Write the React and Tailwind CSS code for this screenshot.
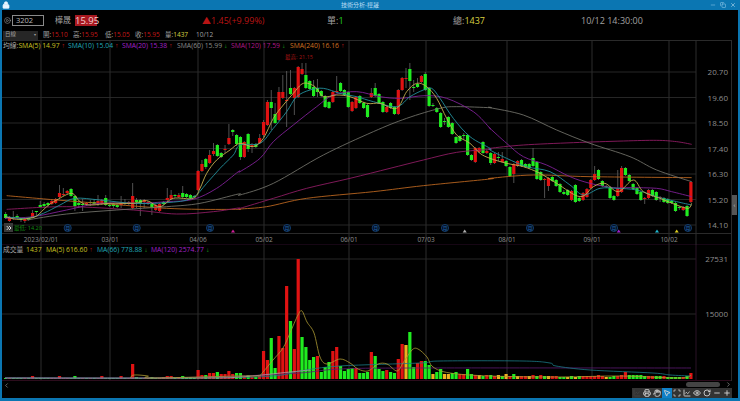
import React from 'react';
import { Lock, Minus, Copy, X, Printer, Hand, MousePointer2, Scan, Eye, RotateCw, Plus, ChevronLeft, ChevronRight, ChevronsRight, PlayCircle, LineChart } from 'lucide-react';

const RED = '#e01212';
const GREEN = '#20ec20';
const ORANGE = '#f0b020';
const barX = (i) => 5.6 + 3.85 * i;

// top, bottom, wick top, wick bottom, colour (page pixels), one row per trading day
const CANDLES = [
  [214,218,212,219,'g'],[217,221,216,222,'r'],[217,218,211,220,'g'],[216,218,214,219,'g'],[218,220,218,222,'g'],[219,221,219,223,'r'],[218,220,218,221,'g'],[213,218,210,218,'r'],[211,212,211,215,'g'],[205,207,201,207,'g'],
  [204,206,202,208,'g'],[203,205,202,207,'g'],[201,204,200,205,'r'],[199,203,198,204,'r'],[193,197,185,198,'r'],[194,195,188,196,'r'],[191,193,190,194,'r'],[189,196,188,197,'g'],[196,206,195,211,'g'],[203,205,200,208,'g'],
  [204,205,199,211,'g'],[203,204,202,206,'r'],[202,203,200,206,'g'],[202,204,199,205,'g'],[201,203,195,206,'r'],[200,204,199,205,'r'],[198,205,195,206,'g'],[205,206,204,207,'g'],[204,206,203,208,'g'],[205,207,204,208,'g'],
  [203,205,196,208,'r'],[203,204,199,205,'g'],[202,204,201,205,'r'],[196,208,183,209,'r'],[200,202,198,208,'g'],[200,204,199,216,'g'],[200,202,199,208,'r'],[202,204,201,205,'r'],[204,207,203,215,'g'],[205,210,204,211,'r'],
  [204,211,203,212,'r'],[202,204,201,205,'g'],[198,200,188,202,'r'],[195,199,190,200,'r'],[195,196,194,198,'g'],[195,197,193,198,'r'],[193,197,186,198,'g'],[194,197,193,198,'g'],[195,198,194,199,'g'],[196,197,195,198,'g'],
  [171,190,170,191,'r'],[164,171,160,172,'r'],[159,167,158,169,'g'],[155,163,150,164,'r'],[151,154,143,156,'r'],[145,156,144,157,'g'],[153,157,152,158,'g'],[149,150,145,153,'r'],[138,144,124,145,'r'],[130,132,129,136,'g'],
  [135,144,134,146,'g'],[137,157,136,160,'g'],[142,157,141,158,'r'],[134,149,133,152,'g'],[145,147,143,153,'r'],[144,147,143,148,'g'],[138,143,134,144,'r'],[122,135,120,137,'r'],[102,125,100,126,'r'],[102,108,90,130,'g'],
  [114,123,103,124,'g'],[92,120,87,121,'r'],[92,98,75,99,'r'],[100,101,71,127,'r'],[88,94,70,95,'g'],[88,98,87,115,'r'],[67,97,66,98,'r'],[69,74,63,75,'r'],[75,88,63,89,'g'],[81,89,80,90,'g'],
  [87,96,80,97,'g'],[88,92,79,97,'g'],[91,96,90,97,'g'],[96,107,95,108,'g'],[102,108,101,109,'g'],[92,102,91,103,'r'],[91,92,76,93,'r'],[83,91,82,92,'g'],[90,95,89,96,'g'],[92,107,91,108,'g'],
  [102,111,101,112,'r'],[97,108,96,109,'r'],[96,103,95,104,'g'],[103,108,102,109,'g'],[105,117,104,118,'g'],[93,97,88,98,'r'],[88,96,83,97,'g'],[94,103,93,104,'g'],[102,112,101,113,'g'],[107,112,106,113,'r'],
  [103,108,102,109,'g'],[107,114,106,115,'g'],[90,114,89,115,'r'],[78,90,77,91,'r'],[78,79,68,88,'r'],[69,81,63,100,'g'],[87,88,80,92,'g'],[84,87,78,88,'g'],[76,82,75,83,'r'],[74,90,72,91,'g'],
  [88,106,87,107,'g'],[105,106,103,107,'g'],[108,112,107,113,'g'],[113,127,112,128,'g'],[121,122,118,125,'g'],[117,127,116,128,'g'],[123,134,122,135,'g'],[137,143,136,144,'g'],[136,141,135,142,'g'],[135,136,133,140,'g'],
  [135,155,134,156,'g'],[155,160,154,161,'g'],[148,162,147,163,'r'],[148,152,147,153,'r'],[142,153,141,154,'g'],[151,153,150,154,'r'],[153,163,152,165,'g'],[154,163,153,164,'r'],[157,158,152,161,'g'],[159,162,152,163,'r'],
  [161,166,160,167,'g'],[167,176,166,177,'g'],[164,174,163,183,'r'],[161,166,160,167,'r'],[160,166,159,167,'g'],[164,167,163,168,'g'],[164,168,163,169,'g'],[158,166,148,167,'g'],[162,179,161,180,'g'],[172,180,171,181,'g'],
  [179,180,178,198,'r'],[178,186,177,191,'r'],[177,181,176,182,'g'],[180,186,179,187,'g'],[184,192,183,193,'g'],[192,194,190,195,'g'],[190,195,189,196,'g'],[191,200,190,201,'r'],[185,202,184,203,'g'],[198,201,197,202,'g'],
  [193,200,192,201,'r'],[189,197,188,198,'r'],[180,188,179,189,'r'],[174,180,166,181,'r'],[170,179,169,180,'g'],[181,186,180,187,'g'],[186,187,185,188,'g'],[187,198,186,199,'g'],[196,200,195,201,'g'],[188,196,170,197,'r'],
  [168,192,166,193,'r'],[168,175,167,176,'g'],[175,181,174,182,'g'],[184,189,183,190,'g'],[188,194,187,195,'g'],[192,200,191,201,'g'],[198,199,197,204,'r'],[190,198,189,199,'r'],[190,196,189,197,'g'],[192,200,191,201,'g'],
  [197,198,196,202,'r'],[198,202,197,203,'g'],[199,203,198,204,'g'],[201,203,200,204,'g'],[203,211,202,212,'g'],[207,208,206,210,'g'],[207,210,206,211,'r'],[206,216,205,217,'g'],[182,202,181,203,'r'],
];

const VOLUME = ('g1 r1 g1 g1 g1 r1 g1 r3 g1 g1 g1 g1 r1 r1 r3 r1 r1 g1 g3 g1 r1 g1 r1 g1 r1 r3 g1 g1 g1 g1 r3 g1 r1 r15 g2 g1 r1 r1 g2 g1 '
  + 'r1 r2 r3 r3 g1 r2 g3 g2 g2 g1 r9 r4 g4 r6 r6 g7 r5 r5 r8 r5 g6 g6 r2 g4 r2 g2 r3 r28 r19 g41 g11 r43 r31 r93 g58 r30 r120 g42 g32 g19 '
  + 'g22 r23 g7 g12 g17 r28 r32 g13 g8 g10 g11 r11 g6 g6 g7 r27 g23 g10 g8 r9 g7 g6 r20 r35 o34 g47 g12 r16 r18 g18 g14 o5 g7 g10 o5 o5 g6 g7 r5 r5 '
  + 'g10 g5 r4 o4 g3 r4 g4 r3 o4 g3 o5 r3 g5 o3 r3 r3 o3 r4 g3 r4 g3 o3 r3 r3 g2 g2 o2 g3 o2 g3 r3 r3 r3 r3 r4 r3 o2 g2 g3 r3 r4 r7 g4 g4 g4 g4 '
  + 'g3 r3 r3 g3 g3 r3 g2 g2 g2 g2 r2 g3 r6').split(' ');

const barColor = { r: RED, g: GREEN, o: ORANGE };

// points were read off three zoomed crops, so each crop has its own offset
const crop = (list, ox, oy) => {
  const out = [];
  for (let i = 0; i < list.length; i += 2) out.push([ox + list[i] / 3, oy + list[i + 1] / 3]);
  return out;
};
const line3 = (a, b, c) => [...crop(a, 0, 60), ...crop(b, 240, 55), ...crop(c, 490, 55)];

const smooth = (pts) => {
  let d = `M${pts[0][0]} ${pts[0][1]}`;
  for (let i = 0; i < pts.length - 1; i++) {
    const p0 = pts[i - 1] || pts[i];
    const p1 = pts[i];
    const p2 = pts[i + 1];
    const p3 = pts[i + 2] || p2;
    const c1 = [p1[0] + (p2[0] - p0[0]) / 6, p1[1] + (p2[1] - p0[1]) / 6];
    const c2 = [p2[0] - (p3[0] - p1[0]) / 6, p2[1] - (p3[1] - p1[1]) / 6];
    d += `C${c1[0]} ${c1[1]} ${c2[0]} ${c2[1]} ${p2[0]} ${p2[1]}`;
  }
  return d;
};

const PRICE_LINES = [
  ['#b8641f', line3([20,407,170,420,300,430,400,438,500,445,600,448,715,448], [0,462,80,455,200,430,400,410,550,392,750,372], [0,370,130,360,300,365,605,368])],
  ['#8c1c62', line3([20,448,200,440,400,450,530,462,640,455,715,444], [0,460,100,430,200,400,330,370,450,340,550,315,650,292,750,283], [0,280,100,270,250,263,400,258,500,256,560,260,605,268])],
  ['#6e6e66', line3([80,480,200,462,350,450,500,440,600,430,715,402], [0,420,100,385,250,300,400,230,500,190,600,160,650,155,750,158], [0,158,100,180,200,225,300,265,420,305,500,345,605,380])],
  ['#7f2096', line3([15,475,100,470,200,450,300,430,420,430,500,425,580,418,650,385,715,335], [0,350,60,310,100,260,160,210,230,155,280,120,350,110,420,125,480,130,555,122,620,130,700,170,750,220], [0,220,50,265,100,305,170,330,240,365,300,385,370,398,420,398,500,400,545,410,605,425])],
  ['#23909c', line3([15,470,80,475,130,460,180,435,225,415,300,420,400,430,500,428,575,415,620,370,660,325,700,285], [0,270,60,265,100,220,140,170,170,125,210,105,250,100,300,115,350,125,400,140,470,155,510,125,550,105,575,100,600,130,640,190,690,245,750,280], [0,285,50,310,110,335,180,350,240,390,280,420,330,400,380,400,440,405,500,425,560,440,605,450])],
  ['#c4ae50', line3([15,470,50,478,85,475,110,468,140,440,170,420,215,400,240,425,270,435,330,430,400,430,440,422,480,440,520,415,580,415,600,385,620,340,650,300,690,270], [0,265,40,275,70,250,100,190,130,150,160,115,190,85,225,95,250,125,290,120,330,125,380,145,420,145,470,160,500,110,530,85,560,95,590,130,620,190,650,240,690,265,720,295], [0,310,50,325,100,335,150,355,200,385,270,425,310,395,345,385,385,410,430,375,460,410,510,430,560,450,595,460,605,445])],
];

const VOL_LINES = [
  ['#5c1a72', [[5,378],[150,378],[240,376],[300,373],[340,369],[420,368],[691,368]]],
  ['#1a7a86', [[5,378],[200,378],[273,376],[300,371],[340,366],[420,363],[440,361],[523,361],[550,363],[556,366],[590,370],[653,373],[670,375],[691,376]]],
  ['#b49aa8', [[5,378],[200,378],[240,377],[290,372],[300,371],[310,370]]],
  ['#ad9a34', [[130,378],[134,375],[148,376],[152,378],[240,376],[258,376],[263,372],[273,360],[283,348],[290,333],[298,315],[302,311],[307,322],[314,333],[320,357],[327,364],[340,359],[350,363],[358,369],[368,371],[378,364],[387,364],[397,371],[403,363],[412,350],[418,349],[427,357],[433,367],[450,373],[490,376],[560,377],[620,376],[680,378],[691,375]]],
];

const V_LINES = [41, 110, 198, 264, 349, 426, 507, 592, 669];
const DATES = [['2023/02/01', 41], ['03/01', 110], ['04/06', 198], ['05/02', 264], ['06/01', 349], ['07/03', 426], ['08/01', 507], ['09/01', 592], ['10/02', 669]];
const PRICES = [['20.70', 72], ['19.60', 97.5], ['18.50', 123], ['17.40', 148.5], ['16.30', 174], ['15.20', 199.5], ['14.10', 225]];
const MONTH_MARKS = [67.7, 136.7, 210, 287, 375.7, 445, 530, 614, 688];
const FLAGS = [[233, '#d0209a'], [464.7, '#b0b0b0'], [618.7, '#a020d0'], [657, '#20b8d0'], [676.7, '#e0d020']];

const PricePanel = () => (
  <svg width="736" height="205" viewBox="2 40 736 205" className="block">
    {PRICES.map(([, y]) => <line key={y} x1="2" x2="696" y1={y} y2={y} stroke="#262626" />)}
    <line x1="2" x2="731.5" y1="40.5" y2="40.5" stroke="#2a2a2a" />
    <line x1="2" x2="731.5" y1="233.5" y2="233.5" stroke="#2a2a2a" />
    <line x1="2" x2="731.5" y1="245" y2="245" stroke="#2c0c28" />
    {V_LINES.map((x) => <line key={x} x1={x} x2={x} y1="40" y2="245" stroke="#2c2c2c" />)}
    <line x1="696" x2="696" y1="40" y2="245" stroke="#2c2c2c" />
    <line x1="731.5" x2="731.5" y1="40" y2="245" stroke="#2c2c2c" />

    {CANDLES.map(([t, b, wt, wb, c], i) => (
      <g key={i}>
        <line x1={barX(i)} x2={barX(i)} y1={wt} y2={wb} stroke="#666" strokeWidth="0.8" />
        <rect x={barX(i) - 1.6} y={t} width="3.2" height={Math.max(b - t, 1)} fill={barColor[c]} />
      </g>
    ))}
    {PRICE_LINES.map(([color, pts]) => <path key={color} d={smooth(pts)} fill="none" stroke={color} strokeWidth="0.9" />)}

    <text x="299" y="59" fontSize="5.5" fill="#a81414" textAnchor="middle">最高: 21.15</text>
    <text x="14" y="229.5" fontSize="5.5" fill="#148c14">最低: 14.20</text>

    {MONTH_MARKS.map((x) => (
      <g key={x}>
        <circle cx={x} cy="228" r="3.6" fill="#061226" stroke="#174d86" strokeWidth="0.7" />
        <text x={x} y="230" fontSize="5" fill="#1f62a8" textAnchor="middle">月</text>
      </g>
    ))}
    {FLAGS.map(([x, color]) => <path key={x} d={`M${x - 2} 232.5L${x + 2} 232.5L${x} 229.5Z`} fill={color} />)}

    {PRICES.map(([label, y]) => <text key={label} x="728" y={y + 3} fontSize="8" fill="#8e8e8e" textAnchor="end">{label}</text>)}
    {DATES.map(([label, x]) => <text key={label} x={x} y="241.5" fontSize="6.5" fill="#8e8e8e" textAnchor="middle">{label}</text>)}
  </svg>
);

const VolumePanel = () => (
  <svg width="736" height="136" viewBox="2 245 736 136" className="block">
    <line x1="2" x2="696" y1="259" y2="259" stroke="#262626" />
    <line x1="2" x2="696" y1="314" y2="314" stroke="#262626" />
    <line x1="2" x2="731.5" y1="380.5" y2="380.5" stroke="#2c0c1c" />
    {V_LINES.map((x) => <line key={x} x1={x} x2={x} y1="245" y2="380" stroke="#2c2c2c" />)}
    <line x1="696" x2="696" y1="245" y2="380" stroke="#2a1226" />
    <line x1="731.5" x2="731.5" y1="245" y2="381" stroke="#2c2c2c" />

    {VOLUME.map((v, i) => {
      const h = Number(v.slice(1));
      return <rect key={i} x={barX(i) - 1.6} y={379 - h} width="3.2" height={h} fill={barColor[v[0]]} />;
    })}
    {VOL_LINES.map(([color, pts]) => <path key={color} d={smooth(pts)} fill="none" stroke={color} strokeWidth="0.8" />)}

    <text x="728" y="262" fontSize="8" fill="#8e8e8e" textAnchor="end">27531</text>
    <text x="728" y="317" fontSize="8" fill="#8e8e8e" textAnchor="end">15000</text>
  </svg>
);

const Up = () => <span className="text-[#c81c1c] text-[4px]">↑</span>;
const Down = () => <span className="text-[#1ca81c] text-[4px]">↓</span>;

const ToolIcon = ({ icon: Icon, active }) => (
  <div className={`w-[10px] h-[10px] flex items-center justify-center ${active ? 'bg-[#0f80c8]' : ''}`}>
    <Icon size={8} strokeWidth={2.6} color="#d8d8d8" />
  </div>
);

export default function App() {
  return (
    <div className="w-[740px] h-[401px] bg-black flex flex-col border-x-2 border-b-[3px] border-[#0b76b2] overflow-hidden text-[#a0a0a0] [font-family:'Open_Sans','Noto_Sans_CJK_TC',sans-serif]">
      <div className="h-[10px] -mx-[2px] bg-[#0b76b2] flex items-center relative shrink-0">
        <Lock size={8} className="ml-[2px]" color="#e8f4ff" fill="#e8f4ff" />
        <div className="flex-1 text-center text-[6px] leading-none text-[#b8dcf4]">技術分析-樺晟</div>
        <div className="flex items-center gap-[4px] mr-[4px]">
          <Minus size={6} color="#9fd0ee" />
          <Copy size={6} color="#9fd0ee" />
          <X size={6} color="#d8ecf8" />
        </div>
      </div>

      {/* quote header */}
      <div className="h-[20px] flex items-center shrink-0 text-[9px] leading-none">
        <PlayCircle size={7} className="ml-[2px] mr-[1px]" color="#9a9a9a" />
        <div className="w-[32px] h-[11px] border border-[#8a8a8a] text-[7.5px] leading-[9px] pl-[3px] text-[#bbb]">3202</div>
        <div className="ml-[11px] w-[20px] text-[8px]">樺晟</div>
        <div className="w-[22px] h-[11px] bg-[#a81820] text-[#f4d0d0] text-[9.5px] leading-[11px] text-center">15.95</div>
        <div className="ml-[105px] w-[125px] text-[#b81414]">▲1.45(+9.99%)</div>
        <div className="w-[126px]">單:<span className="text-[#20d020]">1</span></div>
        <div className="w-[128px]">總:<span className="text-[#d8d040]">1437</span></div>
        <div>10/12 14:30:00</div>
      </div>

      <div className="h-[10px] flex items-center shrink-0 text-[6.5px] leading-none">
        <div className="ml-[1px] w-[35px] h-[9px] bg-[#262626] flex items-center justify-between px-[2px] text-[5.5px]">
          <span>日線</span>
          <span className="text-[4px]">▾</span>
        </div>
        <div className="ml-[5px] w-[30px]">開:<span className="text-[#c01818]">15.10</span></div>
        <div className="w-[32px]">高:<span className="text-[#c01818]">15.95</span></div>
        <div className="w-[30px]">低:<span className="text-[#c01818]">15.05</span></div>
        <div className="w-[30px]">收:<span className="text-[#c01818]">15.95</span></div>
        <div className="w-[31px]">量:<span className="text-[#d8d040]">1437</span></div>
        <div>10/12</div>
      </div>

      <div className="relative shrink-0">
        <PricePanel />
        <div className="absolute left-[1px] top-[1px] flex text-[6.8px] leading-[9px] whitespace-nowrap">
          <div className="w-[65px] text-[#c8c020]"><span className="text-[#a8a8a8]">均線:</span>SMA(5) 14.97 <Up /></div>
          <div className="w-[54px] text-[#20a8b8]">SMA(10) 15.04 <Up /></div>
          <div className="w-[55px] text-[#a020c8]">SMA(20) 15.38 <Up /></div>
          <div className="w-[54px] text-[#8a8a8a]">SMA(60) 15.99 <Down /></div>
          <div className="w-[59px] text-[#b01888]">SMA(120) 17.59 <Down /></div>
          <div className="text-[#d07020]">SMA(240) 16.16 <Up /></div>
        </div>
        <div className="absolute left-[2px] top-[183px] w-[9px] h-[9px] bg-[#3a3a3a] flex items-center justify-center">
          <ChevronsRight size={8} color="#e0e0e0" strokeWidth={3} />
        </div>
        <div className="absolute right-[1px] top-[155px] w-[5px] h-[20px] bg-[#555] flex items-center justify-center text-[6px] leading-none text-[#ccc]">‹</div>
      </div>

      <div className="relative shrink-0">
        <VolumePanel />
        <div className="absolute left-[1px] top-0 h-[9px] flex gap-[4px] text-[6.8px] leading-[9px] whitespace-nowrap">
          <div className="w-[19px]">成交量</div>
          <div className="text-[#c8c020] w-[16px]">1437</div>
          <div className="text-[#c8c020] w-[47px]">MA(5) 616.60 <Up /></div>
          <div className="text-[#20a8b8] w-[50px]">MA(66) 778.88 <Down /></div>
          <div className="text-[#a020c8]">MA(120) 2574.77 <Down /></div>
        </div>
      </div>

      {/* scroll bar + toolbar */}
      <div className="flex-1 flex justify-between">
        <ChevronLeft size={7} className="ml-[1px] mt-[1px]" color="#aaa" />
        <div className="flex flex-col items-end mr-[6px]">
          <div className="h-[7px] flex items-center">
            <div className="w-[34px] h-[5px] rounded-full bg-[#444] mr-[5px]" />
            <ChevronRight size={7} color="#aaa" />
          </div>
          <div className="flex bg-[#333] h-[10px] w-[100px]">
            <div className="w-[10px] h-[10px] flex items-center justify-center"><LineChart size={8} color="#4a4a4a" /></div>
            <ToolIcon icon={Printer} />
            <ToolIcon icon={Hand} />
            <ToolIcon icon={MousePointer2} active />
            <ToolIcon icon={Scan} />
            <ToolIcon icon={LineChart} />
            <ToolIcon icon={Eye} />
            <ToolIcon icon={RotateCw} />
            <ToolIcon icon={Minus} />
            <ToolIcon icon={Plus} />
          </div>
        </div>
      </div>
    </div>
  );
}
